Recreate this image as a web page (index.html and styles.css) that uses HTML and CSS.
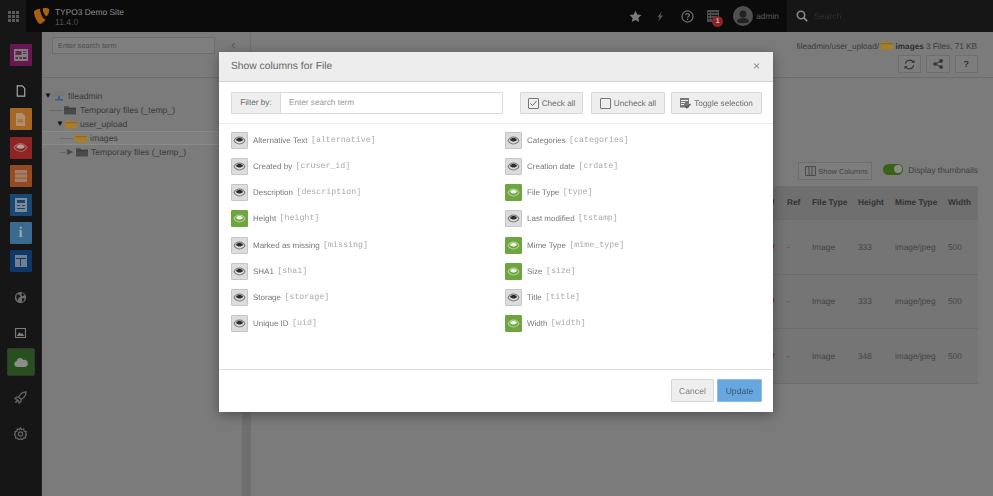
FILE: index.html
```html
<!DOCTYPE html>
<html lang="en">
<head>
<meta charset="utf-8">
<title>Show columns for File</title>
<link rel="stylesheet" href="styles.css">
</head>
<body>
<svg class="defs" width="0" height="0" aria-hidden="true">
  <symbol id="eye" viewBox="0 0 16 16">
    <path fill="currentColor" opacity=".55" d="M8 3.200C4.400 3.200 1.600 5.600.6 8c1 2.400 3.800 4.800 7.400 4.800s6.400-2.400 7.400-4.800C14.400 5.600 11.600 3.200 8 3.200zm0 8.500C5.300 11.700 3.100 10 2.100 8 3.100 6 5.300 4.300 8 4.300s4.900 1.700 5.900 3.700c-1 2-3.200 3.700-5.900 3.700z"/>
    <path fill="currentColor" d="M3.400 7.400C4.400 5.700 6.100 4.500 8 4.500s3.600 1.200 4.600 2.900C11.400 8.400 9.800 9.300 8 9.300s-3.400-.9-4.600-1.900z"/>
  </symbol>
  <symbol id="folder" viewBox="0 0 16 16">
    <path fill="currentColor" d="M0 3h6l1 1.500h9V14H0z"/>
    <path fill="#000" opacity=".18" d="M0 5.500h16V7H0z"/>
  </symbol>
</svg>
<div class="app">
  <header class="topbar">
    <div class="modtoggle">
      <svg width="11" height="11" viewBox="0 0 11 11"><path fill="#5a5a5a" d="M0 0h3v3H0zM4 0h3v3H4zM8 0h3v3H8zM0 4h3v3H0zM4 4h3v3H4zM8 4h3v3H8zM0 8h3v3H0zM4 8h3v3H4zM8 8h3v3H8z"/></svg>
    </div>
    <svg class="logo" width="17" height="18" viewBox="0 0 17 18"><path fill="#a85f0e" d="M12.900 12.300c-.3.100-.5.100-.8.100-2 0-5-7-5-9.300 0-.9.200-1.200.5-1.400C5.100 2 2.300 2.900 1.400 4 1.200 4.300 1 4.800 1 5.500 1 9 4.800 17 7.400 17c1.200 0 3.300-2 5.500-4.700z"/><path fill="#a85f0e" d="M11.700 1C14 1 16.300 1.400 16.300 2.800c0 2.900-1.800 6.300-2.800 6.300-1.700 0-3.800-4.700-3.800-6.700C9.700 1.400 10.100 1 11.700 1z"/></svg>
    <div class="site">
      <div class="site-name">TYPO3 Demo Site</div>
      <div class="site-ver">11.4.0</div>
    </div>
    <div class="tools">
      <svg class="tool t-star" width="13" height="13" viewBox="0 0 16 16"><path fill="#7a7a7a" d="M8 .8l2.200 4.800 5.200.6-3.900 3.500 1.100 5.200L8 12.300l-4.600 2.600 1.100-5.200L.6 6.200l5.200-.6z"/></svg>
      <svg class="tool t-bolt" width="12" height="13" viewBox="0 0 16 16"><path fill="#555" d="M10.500 1L4.500 9h3l-2 6 6.500-8.500H8.500z"/></svg>
      <svg class="tool t-help" width="13" height="13" viewBox="0 0 16 16"><circle cx="8" cy="8" r="6.800" fill="none" stroke="#707070" stroke-width="1.500"/><path fill="none" stroke="#707070" stroke-width="1.600" d="M5.700 6.300C5.900 4.900 6.900 4.400 8 4.400c1.300 0 2.300.8 2.300 1.900 0 1.600-2.300 1.700-2.300 3.300"/><path fill="#707070" d="M7.200 10.700h1.600v1.600H7.200z"/></svg>
      <span class="tool t-list">
        <svg width="12" height="12" viewBox="0 0 12 12"><path fill="#4c4c4c" d="M0 0h12v12H0z"/><path fill="#181818" d="M1 2h2v1H1zM4 2h7v1H4zM1 5h2v1H1zM4 5h7v1H4zM1 8h2v1H1zM4 8h7v1H4z"/></svg>
        <span class="badge">1</span>
      </span>
      <span class="avatar">
        <svg width="20" height="20" viewBox="0 0 20 20"><circle cx="10" cy="10" r="10" fill="#505050"/><circle cx="10" cy="8" r="3.500" fill="#222"/><path fill="#222" d="M4 16c0-3 3-4 6-4s6 1 6 4c-3 1.600-9 1.600-12 0z"/></svg>
      </span>
      <span class="user">admin</span>
    </div>
    <div class="search">
      <svg width="12" height="12" viewBox="0 0 12 12"><circle cx="5" cy="5" r="3.700" fill="none" stroke="#888" stroke-width="1.600"/><path stroke="#888" stroke-width="1.800" d="M7.700 7.700L11.200 11.200"/></svg>
      <span class="search-text">Search</span>
    </div>
  </header>

  <div class="main">
    <nav class="modules">
      <div class="group">
        <div class="mod"><span class="tile c-purple"><svg width="14" height="14" viewBox="0 0 14 14"><path fill="#7f7f7f" d="M0 1h14v12H0z"/><path fill="#5f2a4d" d="M1.500 3h6v4h-6zM9 3h3.500v1H9zM9 5h3.500v1H9zM1.500 9h2.500v2H1.500zM5.500 9h2.500v2H5.500zM9 9h3.500v2H9z"/></svg></span></div>
      </div>
      <div class="group">
        <div class="mod"><svg width="10" height="12" viewBox="0 0 12 14"><path fill="none" stroke="#a8a8a8" stroke-width="1.400" d="M1.500.9h6l3 3v9.200h-9z"/></svg></div>
        <div class="mod"><span class="tile c-orange"><svg width="11" height="13" viewBox="0 0 12 14"><path fill="#b0906f" d="M1 0h7l3 3v11H1z"/><path fill="#a56626" d="M3 7h6v1H3zM3 9h6v1H3z"/></svg></span></div>
        <div class="mod"><span class="tile c-red"><svg width="15" height="15" class="ico-light"><use href="#eye"/></svg></span></div>
        <div class="mod"><span class="tile c-brown"><svg width="14" height="14" viewBox="0 0 14 14"><path fill="#a37d66" d="M1 1h12v3.500H1zM1 5.300h12v3.500H1zM1 9.600h12v3.500H1z"/></svg></span></div>
        <div class="mod"><span class="tile c-blue"><svg width="12" height="14" viewBox="0 0 12 14"><path fill="#7b8b99" d="M0 0h12v14H0z"/><path fill="#1c4669" d="M2 2h8v3H2zM2 7h3v1H2zM7 7h3v1H7zM2 10h8v1H2z"/></svg></span></div>
        <div class="mod"><span class="tile c-sky"><span class="info">i</span></span></div>
        <div class="mod"><span class="tile c-navy"><svg width="14" height="14" viewBox="0 0 14 14"><path fill="#708090" d="M1 1h12v12H1z"/><path fill="#123866" d="M2 4h10v1H2zM6 5h1v7H6z"/></svg></span></div>
      </div>
      <div class="group">
        <div class="mod"><svg width="13" height="13" viewBox="0 0 14 14"><circle cx="7" cy="7" r="6" fill="#6d6d6d"/><path fill="#161616" d="M3 3.500l3 .5 1 2-2 1.500-1.500 3L2.500 7zM8.500 1.800l3 2-1.500 1.500-2-.5zM9 7.500l2.500.5-1.500 3.500-1.500-.5z"/></svg></div>
      </div>
      <div class="group">
        <div class="mod"><svg width="11" height="10" viewBox="0 0 13 12"><path fill="none" stroke="#7d7d7d" stroke-width="1.300" d="M.6.600h11.800v10.800H.6z"/><path fill="#7d7d7d" d="M2 9.500L5 5l2 2 1.500-1L11 9.500z"/></svg></div>
        <div class="mod"><span class="tile-active"><svg width="14" height="10" viewBox="0 0 14 10"><path fill="#8c8c8c" d="M3 10a3 3 0 0 1-.4-5.900A3.600 3.600 0 0 1 9.400 3 3.500 3.500 0 0 1 11 10z"/></svg></span></div>
      </div>
      <div class="group">
        <div class="mod"><svg width="13" height="13" viewBox="0 0 14 14"><path fill="none" stroke="#666" stroke-width="1.300" d="M13 1C9 1.200 6.500 3.500 5 6.500L7.500 9C10.500 7.500 12.800 5 13 1zM5 6.500H2.500L1 8.500l3 .5M7.500 9v2.500L5.500 13 5 10M4 9l-2.500 3.500L5 10"/></svg></div>
      </div>
      <div class="group">
        <div class="mod"><svg width="13" height="13" viewBox="0 0 16 16"><path fill="none" stroke="#666" stroke-width="1.500" d="M8 1l1.400 2.100 2.500-.6.500 2.500 2.500.6-.6 2.400L16 9.500l-2 1.400.2 2.500-2.500.1L10.200 15.800 8 14.500l-2.200 1.300-1.500-2.200-2.500-.1.200-2.500-2-1.400 1.700-1.500L1.100 5.700l2.500-.6.500-2.500 2.500.6z"/><circle cx="8" cy="8.500" r="2.600" fill="none" stroke="#666" stroke-width="1.500"/></svg></div>
      </div>
    </nav>

    <aside class="treepane">
      <div class="treehead">
        <div class="treesearch">Enter search term</div>
        <span class="collapse">‹</span>
      </div>
      <div class="tree">
        <div class="node n-root"><span class="caret">▼</span><svg width="12" height="12" viewBox="0 0 12 12"><path fill="#777" d="M0 1h12v5H0z"/><path fill="#345f8c" d="M5 6h2v3h3v1.500H2V9h3z"/></svg><span class="label l-root">fileadmin</span></div>
        <div class="node n-temp"><span class="conn c-temp"></span><svg class="fld fld-gray" width="12" height="12"><use href="#folder"/></svg><span class="label l-temp">Temporary files (_temp_)</span></div>
        <div class="node n-upload"><span class="caret">▼</span><svg class="fld fld-yellow" width="12" height="12"><use href="#folder"/></svg><span class="label l-upload">user_upload</span></div>
        <div class="node n-images"><span class="conn c-images"></span><svg class="fld fld-yellow" width="12" height="12"><use href="#folder"/></svg><span class="label l-upload">images</span></div>
        <div class="node n-images2"><span class="conn c-short"></span><span class="caret caret-r">▶</span><svg class="fld fld-gray" width="12" height="12"><use href="#folder"/></svg><span class="label l-upload">Temporary files (_temp_)</span></div>
      </div>
    </aside>
    <div class="splitter"></div>

    <main class="content">
      <div class="docheader">
        <div class="crumb">fileadmin/user_upload/ <svg class="fld fld-yellow crumb-ico" width="12" height="12"><use href="#folder"/></svg> <b>images</b> 3 Files, 71 KB</div>
        <div class="docbtns">
          <span class="dbtn"><svg width="11" height="11" viewBox="0 0 12 12"><path fill="none" stroke="#333" stroke-width="1.200" d="M1.500 5A4.600 4.600 0 0 1 10 3.500M10.500 7A4.600 4.600 0 0 1 2 8.500"/><path fill="#333" d="M8 4h3.500V.8zM4 8H.5v3.200z"/></svg></span>
          <span class="dbtn"><svg width="10" height="10" viewBox="0 0 12 12"><path stroke="#333" stroke-width="1.200" d="M2.500 6L9.500 2.500M2.500 6l7 3.500"/><circle cx="2.500" cy="6" r="2.200" fill="#333"/><circle cx="9.700" cy="2.300" r="2.200" fill="#333"/><circle cx="9.700" cy="9.700" r="2.200" fill="#333"/></svg></span>
          <span class="dbtn dbtn-q">?</span>
        </div>
      </div>
      <div class="listtools">
        <span class="showcols"><svg width="11" height="10" viewBox="0 0 11 10"><path fill="none" stroke="#4c4c4c" d="M.5.500h10v9H.5zM4 .500v9M7 .500v9"/></svg>Show Columns</span>
        <span class="switch"><span class="knob"></span></span>
        <span class="thumbs">Display thumbnails</span>
      </div>
      <table class="files">
        <colgroup><col class="w-name"><col class="w-rw"><col class="w-ref"><col class="w-type"><col class="w-h"><col class="w-mime"><col class="w-w"></colgroup>
        <thead>
          <tr class="head"><th>Name</th><th class="rw">RW</th><th>Ref</th><th>File Type</th><th>Height</th><th>Mime Type</th><th>Width</th></tr>
        </thead>
        <tbody>
          <tr class="r1"><td></td><td class="rw red">RW</td><td>-</td><td>Image</td><td>333</td><td>image/jpeg</td><td>500</td></tr>
          <tr class="r2"><td></td><td class="rw red">RW</td><td>-</td><td>Image</td><td>333</td><td>image/jpeg</td><td>500</td></tr>
          <tr class="r3"><td></td><td class="rw red">RW</td><td>-</td><td>Image</td><td>348</td><td>image/jpeg</td><td>500</td></tr>
        </tbody>
      </table>
    </main>
  </div>

  <section class="modal">
    <div class="m-head">
      <span class="m-title">Show columns for File</span>
      <span class="m-close">×</span>
    </div>
    <div class="m-tools">
      <div class="filter">
        <span class="f-label">Filter by:</span>
        <span class="f-input">Enter search term</span>
      </div>
      <div class="m-actions">
        <span class="btn b-check"><svg width="11" height="11" viewBox="0 0 11 11"><path fill="none" stroke="#777" d="M1 .5h9a.5.5 0 0 1 .5.500v9a.5.5 0 0 1-.5.500H1a.5.5 0 0 1-.5-.5V1A.5.5 0 0 1 1 .5z"/><path fill="none" stroke="#666" d="M2.500 5.500l2 2 4-4.500"/></svg>Check all</span>
        <span class="btn b-uncheck"><svg width="11" height="11" viewBox="0 0 11 11"><path fill="none" stroke="#777" d="M1 .5h9a.5.5 0 0 1 .5.500v9a.5.5 0 0 1-.5.500H1a.5.5 0 0 1-.5-.5V1A.5.5 0 0 1 1 .5z"/></svg>Uncheck all</span>
        <span class="btn b-toggle"><svg width="11" height="11" viewBox="0 0 11 11"><path fill="#777" d="M0 0h9v9.500H0z"/><path fill="#eee" d="M1 2h7v1H1zM1 4h4v1H1zM1 6h3v1H1z"/><path fill="none" stroke="#555" stroke-width="1.200" d="M5 8l1.800 1.800L10.500 6"/></svg>Toggle selection</span>
      </div>
    </div>
    <div class="m-grid">
      <div class="col"><span class="ck"><svg width="13" height="13"><use href="#eye"/></svg></span><span class="t">Alternative Text</span><code>[alternative]</code></div>
      <div class="col"><span class="ck"><svg width="13" height="13"><use href="#eye"/></svg></span><span class="t">Categories</span><code>[categories]</code></div>
      <div class="col"><span class="ck"><svg width="13" height="13"><use href="#eye"/></svg></span><span class="t">Created by</span><code>[cruser_id]</code></div>
      <div class="col"><span class="ck"><svg width="13" height="13"><use href="#eye"/></svg></span><span class="t">Creation date</span><code>[crdate]</code></div>
      <div class="col"><span class="ck"><svg width="13" height="13"><use href="#eye"/></svg></span><span class="t">Description</span><code>[description]</code></div>
      <div class="col"><span class="ck on"><svg width="13" height="13"><use href="#eye"/></svg></span><span class="t">File Type</span><code>[type]</code></div>
      <div class="col"><span class="ck on"><svg width="13" height="13"><use href="#eye"/></svg></span><span class="t">Height</span><code>[height]</code></div>
      <div class="col"><span class="ck"><svg width="13" height="13"><use href="#eye"/></svg></span><span class="t">Last modified</span><code>[tstamp]</code></div>
      <div class="col"><span class="ck"><svg width="13" height="13"><use href="#eye"/></svg></span><span class="t">Marked as missing</span><code>[missing]</code></div>
      <div class="col"><span class="ck on"><svg width="13" height="13"><use href="#eye"/></svg></span><span class="t">Mime Type</span><code>[mime_type]</code></div>
      <div class="col"><span class="ck"><svg width="13" height="13"><use href="#eye"/></svg></span><span class="t">SHA1</span><code>[sha1]</code></div>
      <div class="col"><span class="ck on"><svg width="13" height="13"><use href="#eye"/></svg></span><span class="t">Size</span><code>[size]</code></div>
      <div class="col"><span class="ck"><svg width="13" height="13"><use href="#eye"/></svg></span><span class="t">Storage</span><code>[storage]</code></div>
      <div class="col"><span class="ck"><svg width="13" height="13"><use href="#eye"/></svg></span><span class="t">Title</span><code>[title]</code></div>
      <div class="col"><span class="ck"><svg width="13" height="13"><use href="#eye"/></svg></span><span class="t">Unique ID</span><code>[uid]</code></div>
      <div class="col"><span class="ck on"><svg width="13" height="13"><use href="#eye"/></svg></span><span class="t">Width</span><code>[width]</code></div>
    </div>
    <div class="m-foot">
      <span class="fbtn cancel">Cancel</span>
      <span class="fbtn update">Update</span>
    </div>
  </section>
</div>
</body>
</html>
```

FILE: styles.css
```css
* { box-sizing: border-box; }
html, body { margin: 0; height: 100%; overflow: hidden; background: #7b7b7b; }
body { font-family: "Liberation Sans", Arial, sans-serif; font-size: 8.6px; color: #333; text-rendering: geometricPrecision; }
.defs { position: absolute; }
.app { width: 993px; height: 496px; display: flex; flex-direction: column; filter: blur(0.6px); }

/* top bar */
.topbar { height: 32px; flex: none; background: #0b0b0b; display: flex; align-items: center; }
.modtoggle { width: 26px; height: 32px; background: #161616; display: flex; align-items: center; justify-content: center; }
.logo { margin-left: 7px; }
.site { margin: 2px 0 0 5px; line-height: 10.5px; }
.site-name { color: #8f8f8f; font-size: 8.4px; }
.site-ver { color: #505050; font-size: 8.6px; }
.tools { margin-left: auto; display: flex; align-items: center; height: 32px; }
.t-bolt { margin-left: 12px; }
.t-help { margin-left: 15px; }
.t-list { position: relative; margin-left: 13px; display: flex; }
.badge { position: absolute; left: 5px; top: 6px; width: 11px; height: 11px; border-radius: 50%; background: #8f2226; color: #bbb; font-size: 7px; line-height: 11px; text-align: center; font-weight: bold; }
.avatar { margin-left: 14px; display: flex; }
.user { margin-left: 3px; color: #5c5c5c; font-size: 8.4px; }
.search { width: 206px; height: 32px; margin-left: 8px; background: #161616; display: flex; align-items: center; padding-left: 9px; }
.search-text { margin-left: 6px; color: #2f2f2f; font-size: 8.6px; }

/* main area */
.main { flex: 1; display: flex; min-height: 0; }
.modules { width: 42px; flex: none; background: #161616; border-right: 1px solid #242424; padding-top: 9px; display: flex; flex-direction: column; gap: 7.500px; }
.mod { height: 28.400px; display: flex; align-items: center; justify-content: center; }
.tile { width: 22px; height: 22px; display: flex; align-items: center; justify-content: center; border-radius: 1px; }
.c-purple { background: #681750; }
.c-orange { background: #a56626; }
.c-red { background: #8f2522; }
.c-brown { background: #924b23; }
.c-blue { background: #1b4872; }
.c-sky { background: #3b6a8e; }
.c-navy { background: #0f3868; }
.ico-light { color: #b09e9e; }
.info { color: #97a5b1; font: bold 15px "Liberation Serif", serif; }
.tile-active { width: 28px; height: 28px; background: #28501e; border: 1px solid #363636; border-radius: 2px; display: flex; align-items: center; justify-content: center; }

/* tree */
.treepane { width: 200px; flex: none; background: #7b7b7b; }
.treehead { height: 46px; border-bottom: 1px solid #6d6d6d; padding: 5px 0 0 10px; display: flex; align-items: flex-start; }
.treesearch { width: 163px; height: 17px; border: 1px solid #6e6e6e; background: #7f7f7f; color: #4c4c4c; font-size: 7.400px; line-height: 15px; padding-left: 5px; }
.collapse { margin-left: 16px; color: #555; font-size: 13px; line-height: 15px; }
.tree { padding-top: 11px; }
.node { height: 14px; display: flex; align-items: center; color: #3a3a3a; }
.n-root { padding-left: 2px; }
.n-temp { padding-left: 7px; }
.n-upload { padding-left: 14px; }
.n-images { padding-left: 18px; background: #808080; border-top: 1px solid #8a8a8a; border-bottom: 1px solid #8a8a8a; }
.n-images2 { padding-left: 18px; }
.caret { width: 8px; font-size: 8px; line-height: 1; color: #111; margin-right: 1px; }
.caret-r { color: #4a4a4a; }
.conn { display: block; height: 1px; background: #6a6a6a; margin-right: 1px; }
.c-temp { width: 14px; }
.c-images { width: 14px; }
.c-short { width: 6px; }
.label { white-space: nowrap; }
.l-root { margin-left: 3px; }
.l-temp { margin-left: 4px; }
.l-upload { margin-left: 3px; }
.fld-gray { color: #4a4a4a; }
.fld-yellow { color: #a67e28; }
.splitter { width: 8px; flex: none; background: linear-gradient(#7b7b7b 45px, #6d6d6d 45px, #6d6d6d 46px, #6f6f6f 46px); }

/* content */
.content { flex: 1; min-width: 0; background: #7b7b7b; border-left: 1px solid #707070; padding: 0 15px 0 14px; }
.docheader { height: 46px; margin: 0 -15px 0 -14px; padding: 7px 16px 0 14px; border-bottom: 1px solid #6d6d6d; }
.crumb { height: 10px; text-align: right; color: #3a3a3a; font-size: 8.200px; line-height: 10px; white-space: nowrap; }
.crumb-ico { vertical-align: -2px; }
.crumb b { color: #2f2f2f; }
.docbtns { display: flex; justify-content: flex-end; gap: 5px; margin: 6px -1px 0 0; }
.dbtn { width: 23.500px; height: 18px; border: 1px solid #6e6e6e; background: #7d7d7d; display: flex; align-items: center; justify-content: center; color: #333; font-weight: bold; font-size: 9px; }
.listtools { margin-top: 84px; height: 18px; display: flex; align-items: center; justify-content: flex-end; }
.showcols { width: 74px; height: 18px; border: 1px solid #6e6e6e; background: #7d7d7d; display: flex; align-items: center; gap: 2px; padding-left: 6px; font-size: 7.400px; color: #444; white-space: nowrap; }
.switch { width: 20px; height: 11px; margin: -4px 0 0 11px; border-radius: 6px; background: #3a6119; display: flex; align-items: center; justify-content: flex-end; padding-right: 1px; }
.knob { width: 8px; height: 8px; border-radius: 50%; background: #8a8a8a; }
.thumbs { margin: -3px 0 0 5px; color: #3f3f3f; font-size: 8.300px; white-space: nowrap; }
.files { width: 713px; table-layout: fixed; border-collapse: collapse; margin-top: 6px; font-size: 8.300px; background: #757575; }
.w-name { width: 496px; } .w-rw { width: 21px; } .w-ref { width: 25px; } .w-type { width: 46px; }
.w-h { width: 37px; } .w-mime { width: 53px; } .w-w { width: 35px; }
.files th, .files td { padding: 0 0 0 5px; text-align: left; border-bottom: 1px solid #6c6c6c; white-space: nowrap; }
.files th { color: #333; background: #6f6f6f; }
.files td { color: #444; }
.head { height: 33px; }
.r1 { height: 55px; } .r2 { height: 54px; } .r3 { height: 55px; }
.files .rw { padding-left: 0; }
.files .red { color: #8f1f1f; font-weight: bold; }

/* modal */
.modal { position: absolute; left: 219px; top: 52px; width: 554px; height: 360px; background: #fff; display: flex; flex-direction: column; box-shadow: 0 3px 12px rgba(0,0,0,.35); }
.m-head { height: 30px; flex: none; background: #ededed; border-bottom: 1px solid #d4d4d4; display: flex; align-items: center; justify-content: space-between; padding: 0 13px 0 12px; }
.m-title { color: #666; font-size: 10.300px; }
.m-close { color: #8a8a8a; font-size: 12px; margin-bottom: 2px; }
.m-tools { height: 42px; flex: none; border-bottom: 1px solid #ececec; padding: 10px 11px 0 12px; display: flex; justify-content: space-between; }
.filter { width: 272px; height: 22px; display: flex; border: 1px solid #dadada; border-radius: 1px; }
.f-label { width: 49px; flex: none; background: #eee; border-right: 1px solid #dadada; color: #6a6a6a; font-size: 8.200px; line-height: 20px; text-align: center; }
.f-input { padding-left: 8px; color: #9a9a9a; font-size: 8.200px; line-height: 20px; }
.m-actions { display: flex; gap: 6px; }
.btn { height: 22px; background: #eee; border: 1px solid #d8d8d8; border-radius: 1px; display: flex; align-items: center; justify-content: center; gap: 3px; color: #6e6e6e; font-size: 8.200px; white-space: nowrap; }
.b-check { width: 63px; margin-right: 2px; }
.b-uncheck { width: 74px; }
.b-toggle { width: 91px; }
.m-grid { flex: 1; padding: 3px 0 0 12px; display: grid; grid-template-columns: 274px 1fr; grid-auto-rows: 26.250px; align-content: start; }
.col { display: flex; align-items: center; white-space: pre; color: #777; font-size: 8px; }
.ck { width: 17px; height: 17px; flex: none; margin-right: 5px; background: #dcdcdc; border: 1px solid #c6c6c6; border-radius: 1px; display: flex; align-items: center; justify-content: center; color: #2c2c2c; }
.ck.on { background: #6fa53f; border-color: #6fa53f; color: #eef4e6; }
.t { margin-right: 3.400px; }
.col code { font-family: "Liberation Mono", monospace; font-size: 8.300px; color: #ababab; }
.m-foot { height: 43px; flex: none; border-top: 1px solid #e2e2e2; padding: 9px 11px 0 0; display: flex; justify-content: flex-end; gap: 3px; }
.fbtn { height: 23px; display: flex; align-items: center; justify-content: center; font-size: 8.600px; border-radius: 1px; }
.cancel { width: 43px; background: #eee; border: 1px solid #d4d4d4; color: #808080; }
.update { width: 45px; background: #68a7dd; border: 1px solid #8fbde5; color: #35597a; }
```
